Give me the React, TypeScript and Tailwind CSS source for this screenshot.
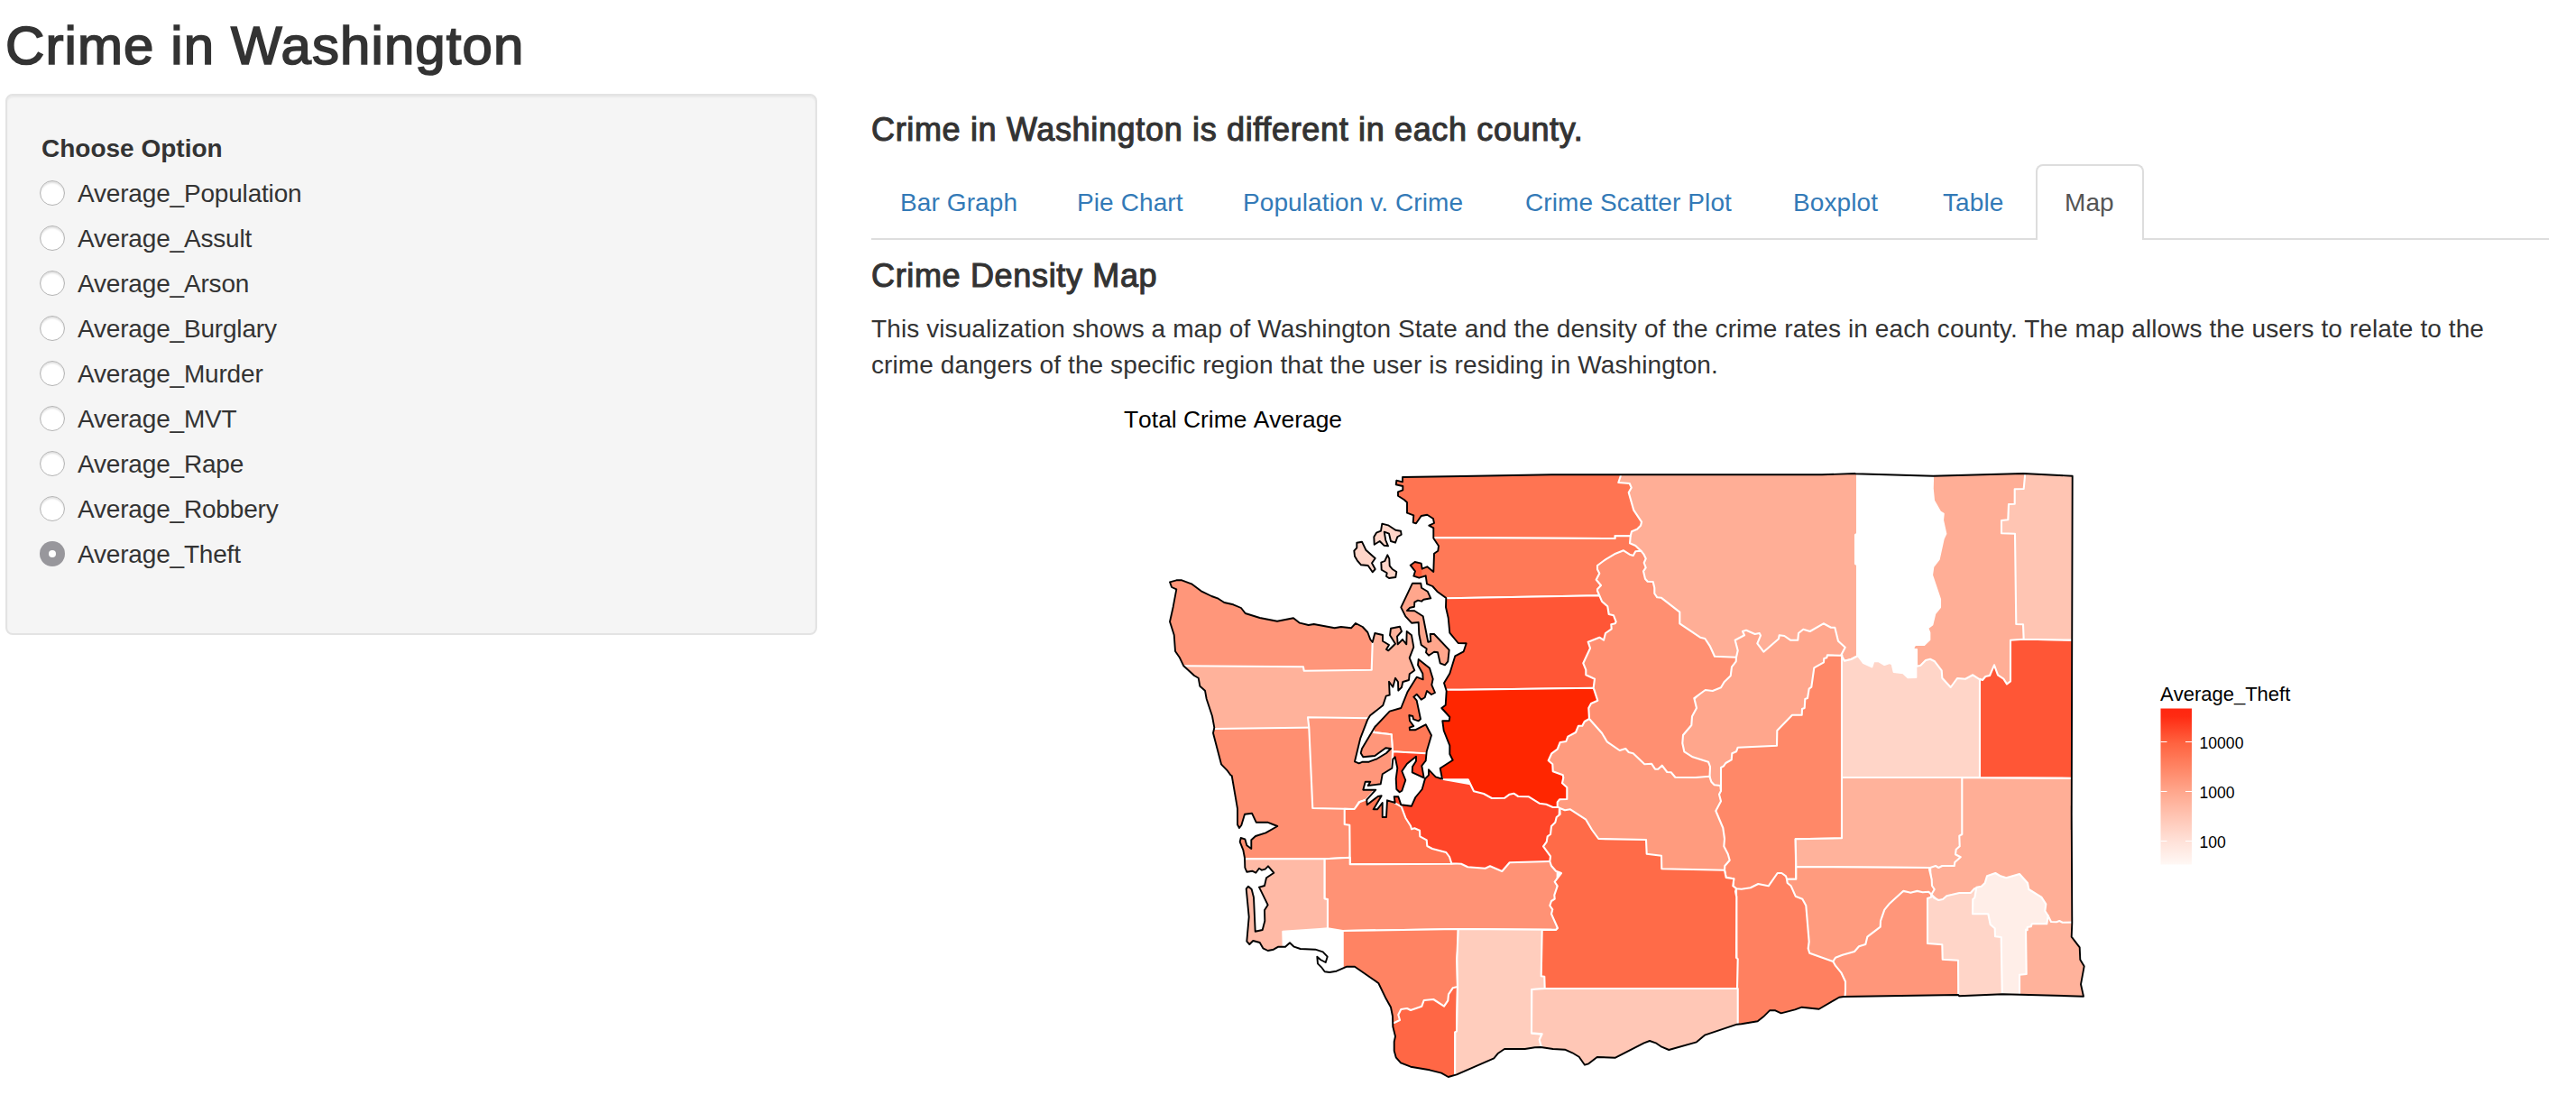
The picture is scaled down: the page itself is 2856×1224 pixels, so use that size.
import React from "react";

const options = [
  "Average_Population",
  "Average_Assult",
  "Average_Arson",
  "Average_Burglary",
  "Average_Murder",
  "Average_MVT",
  "Average_Rape",
  "Average_Robbery",
  "Average_Theft",
];

const tabs = [
  { label: "Bar Graph", width: "w-[192px]" },
  { label: "Pie Chart", width: "w-[180px]" },
  { label: "Population v. Crime", width: "w-[309px]" },
  { label: "Crime Scatter Plot", width: "w-[293px]" },
  { label: "Boxplot", width: "w-[162px]" },
  { label: "Table", width: "w-[131px]" },
  { label: "Map", width: "w-[120px]", active: true },
];

// Map geometry is stored per sheet; a letter switches to that sheet's origin.
// Sheet units are a third of a map unit.
const sheets: Record<string, [number, number]> = {
  A: [1280, 500],
  C: [1480, 700],
  D: [1340, 860],
  E: [1620, 500],
  F: [1960, 500],
  G: [1680, 840],
  H: [1980, 860],
};

function shape(points: string): string {
  let origin = sheets.A;
  const out: string[] = [];
  for (const token of points.trim().split(/\s+/)) {
    if (sheets[token]) {
      origin = sheets[token];
      continue;
    }
    const [x, y] = token.split(",").map(Number);
    out.push(`${(origin[0] + x / 3).toFixed(1)} ${(origin[1] + y / 3).toFixed(1)}`);
  }
  return `M${out.join("L")}Z`;
}

const mainland = `
A 825,87 E 0,84 300,79 1200,79 1310,75 F 290,76 550,83 850,75 1013,83 1010,1260
H 950,100 952,490 950,536 977,571 979,612 992,634 981,694 990,734 780,728 720,727 577,733 573,729 192,735
G 1077,797 1010,836 953,830 930,838 884,850 865,841 846,841 825,862 806,877 752,886 737,887 630,923 603,946 511,972 487,962 467,949 447,942 428,949 333,998 272,996 244,1018 231,1022 212,995 190,982 165,971 125,969 85,963
D 1085,904 1052,909 984,909 963,923 949,940 825,994 797,1002 774,989 735,979 672,968 639,955 623,937 617,915 617,885 621,867 613,835 612,800 606,770 590,742 565,690 486,635 460,635 425,650 402,654 386,652 375,637 363,625 361,602 372,612 389,621 395,602 380,586 355,578 305,576 284,569 270,556 255,569 232,569 216,578 197,582 181,574 170,555 148,549 136,561 127,551 134,470 125,376 132,368 143,378 150,405 155,518 179,513 187,483 186,447 197,430 168,371 186,366 192,340 217,323 198,301 188,311 177,314 168,308 157,323 145,317 127,320 121,306 120,274 115,247 104,220 107,207 121,211 127,232 142,243 142,214 156,201 190,190 229,168 196,155 158,155 144,125 120,128 109,165 102,174 96,163 96,110 77,0
A 253,1078 243,1064 222,1042 195,938 199,920 192,882 173,825 168,797 151,782 146,755 132,747 97,715 84,688 69,666 65,612 51,568 62,518 73,460 57,453 51,436 73,430 91,430 123,442 155,466 190,483 212,491 232,504 262,511 288,522 302,540 350,555 408,566 462,556 483,572 512,579 530,576 599,589 620,585 654,589 669,573 692,585 709,603 718,627 725,636 733,606 759,612 759,632 780,645 771,660 778,664 801,641 783,613 786,590 816,584 822,600 807,617 809,643 825,627 838,643 839,600 855,613 862,652 848,688 865,730 848,742 846,762 826,768 822,786 811,797 810,768 801,755 793,785 780,767 782,812 770,815 760,846 717,880 708,895 685,955 666,1033 680,1039 692,1034 713,1034 740,1024 771,1005 786,990 769,988 733,1014 694,1018 686,1005 690,990 733,918 782,866 820,855 842,800
C 272,152 293,160 292,140 276,112 278,93 315,122 326,158 322,178 333,204 321,210 306,198 299,220 287,227 272,209 262,218 272,230 285,292 278,298 261,292 259,282 247,279 249,298 262,315 248,320 249,328 267,328 302,310 321,346 305,400 302,430 289,447 296,487 257,469 258,450 270,431 270,416 240,440 223,465 235,495 223,530 215,535 205,525 203,490 208,455 200,418 193,425 190,455 158,475 152,508 110,513 118,500 101,500 94,527 136,527 106,560 107,577 143,549 155,547 128,592 141,592 158,570 158,618 171,618 174,562 200,570 197,550 211,550 220,577 255,581 268,552 290,525 300,490 312,478 312,460 335,484 357,491 350,455 392,428 382,408 382,380 362,330 358,298 380,298 382,285 355,255 368,245 371,198 363,172 382,140 400,82 428,67 437,40 410,39
A 982,605 977,555 969,520 970,489 940,467 925,450 906,442 902,415 880,422 862,416 867,400 851,380 866,369 887,374 890,392 907,385 928,402 930,341 943,332 945,316 928,290 928,256 913,248 930,240 927,225 907,212 887,216 870,241 860,238 862,214 840,206 840,171 830,162 810,149 810,136 826,130 826,117 803,112 805,98 825,103`;

const islands = [
  {
    name: "Island",
    fill: "#FFA68C",
    points:
      "A 858,440 886,440 888,455 908,467 919,490 895,494 888,500 876,497 865,503 864,518 850,521 840,531 865,532 893,550 910,635 919,633 917,609 930,609 980,662 976,700 966,712 950,706 942,670 930,668 912,680 903,670 905,658 887,645 880,610 878,570 855,572 835,550 820,520",
  },
  {
    name: "Orcas",
    fill: "#FFD5C8",
    points:
      "A 757,242 777,247 802,263 819,266 821,278 808,286 801,305 786,300 780,275 764,269 769,297 777,316 763,314 749,300 731,311 730,286 738,272 753,266",
  },
  {
    name: "San Juan",
    fill: "#FFD5C8",
    points:
      "A 673,305 690,302 703,329 734,357 723,373 734,393 725,403 710,381 687,379 674,364 666,350 664,332 673,322",
  },
  {
    name: "Lopez",
    fill: "#FFD5C8",
    points:
      "A 775,346 781,358 782,382 791,393 805,402 802,420 780,423 771,417 773,406 755,395 754,371 766,366",
  },
];

// Listed back to front: a later county covers the loose edge of an earlier one.
const counties = [
  { name: "Jefferson", fill: "#FFB29B", points: "A 0,560 900,560 900,930 0,930" },
  { name: "Clallam", fill: "#FF967A", points: "A 0,400 725,400 725,638 722,728 497,731 495,718 98,715 0,715" },
  { name: "Grays Harbor", fill: "#FF8F71", points: "A 0,924 200,924 600,919 D 480,0 470,272 386,277 0,277" },
  { name: "Pacific", fill: "#FFBAA6", points: "D 0,277 386,277 386,409 396,411 396,650 0,650" },
  { name: "Wahkiakum", fill: "#FFFFFF", points: "D 249,600 247,518 370,510 396,508 446,516 446,700 249,700" },
  { name: "Kitsap", fill: "#FF7957", points: "A 725,900 785,848 830,785 869,738 870,680 960,680 950,1010 792,1000 788,943 728,936" },
  {
    name: "Mason",
    fill: "#FF967A",
    points: "A 510,886 720,889 728,936 788,943 792,1000 790,1055 C 220,580 100,562 80,568 65,592 32,590 D 346,108 341,0 A 514,920",
  },
  {
    name: "Thurston",
    fill: "#FF7452",
    points: "D 452,110 485,111 502,88 525,79 560,40 641,60 810,250 808,293 470,295 469,164 452,162",
  },
  {
    name: "Lewis",
    fill: "#FF9275",
    points: "D 386,277 470,272 470,295 808,293 1000,270 1160,270 1160,512 830,510 446,516 396,508 396,411 386,409",
  },
  { name: "Clark", fill: "#FF6745", points: "D 500,690 828,690 825,850 820,853 819,1020 500,1020" },
  {
    name: "Cowlitz",
    fill: "#FF8363",
    points:
      "D 446,516 830,510 830,560 826,610 828,702 812,706 798,727 796,748 783,767 748,744 716,747 709,767 672,780 660,774 640,777 631,795 636,813 617,822 500,822 446,700",
  },
  {
    name: "Skamania",
    fill: "#FFCDBD",
    points:
      "D 830,510 1140,512 1140,708 1075,711 1075,857 1108,860 1101,878 1107,903 1107,1000 819,1020 820,853 825,850 828,702 826,610",
  },
  { name: "Benton", fill: "#FF8060", points: "G 735,420 870,370 960,380 1100,500 1100,1000 738,1000" },
  { name: "Klickitat", fill: "#FFC7B6", points: "G 740,768 98,768 55,771 54,916 89,919 80,938 87,963 87,1100 740,1100" },
  {
    name: "Walla Walla",
    fill: "#FF967A",
    points: "H 157,618 165,632 184,655 198,685 198,715 195,760 600,760 600,385 157,385",
  },
  { name: "Okanogan", fill: "#FFAE96", points: "E 500,60 1317,60 1317,682 1298,692 1275,698 1263,680 900,740 500,500" },
  {
    name: "Grant",
    fill: "#FF8868",
    points:
      "E 1267,679 1000,679 830,1000 830,1200 G 680,330 696,374 701,399 727,403 724,427 735,436 752,437 782,433 808,420 842,427 872,384 886,384 900,394 903,404 934,404 932,271 1086,268",
  },
  { name: "Stevens", fill: "#FFAE96", points: "F 400,60 1013,60 1013,800 400,800" },
  {
    name: "Lincoln",
    fill: "#FFD5C8",
    points:
      "F 246,683 255,698 277,693 300,681 320,660 495,660 495,716 508,713 525,696 540,692 555,700 578,730 580,755 608,786 630,756 657,758 682,745 705,760 705,1086 246,1086",
  },
  { name: "Whitman", fill: "#FFAE96", points: "H 480,6 950,8 970,8 970,520 520,520 520,430 484,395 480,300" },
  {
    name: "Spokane",
    fill: "#FF5636",
    points:
      "F 807,629 851,626 1020,629 1020,1088 705,1086 705,758 714,762 724,750 738,747 753,712 765,745 784,758 795,775 807,766",
  },
  {
    name: "Pend Oreille",
    fill: "#FFC5B3",
    points: "F 855,60 855,84 851,126 821,127 821,176 801,177 799,229 777,231 777,274 822,275 826,576 849,577 851,626 1020,629 1020,60",
  },
  {
    name: "Adams",
    fill: "#FFB29B",
    points:
      "H 186,6 586,6 586,195 577,200 578,235 566,245 564,262 581,271 562,288 560,300 520,300 508,306 498,300 480,306 34,303 32,211 186,208",
  },
  {
    name: "Franklin",
    fill: "#FF9B7E",
    points:
      "H 34,303 480,306 477,311 485,345 486,366 494,378 484,395 475,386 455,388 437,383 415,389 391,383 345,425 328,446 315,483 314,503 271,536 265,561 243,568 228,585 188,596 165,605 157,618 79,590 74,575 77,552 67,432 55,410 32,401 17,367 5,357 3,344 34,344",
  },
  {
    name: "Columbia",
    fill: "#FFD5C8",
    points: "H 471,408 483,404 484,395 492,406 508,414 522,411 535,400 577,390 614,390 628,375 720,400 720,760 574,760 573,614 521,611 520,562 471,558",
  },
  { name: "Asotin", fill: "#FFB29B", points: "H 777,760 777,500 850,480 872,466 882,486 900,487 910,483 920,488 1020,487 1020,760" },
  {
    name: "Garfield",
    fill: "#FFEEE8",
    points:
      "H 634,371 650,368 662,357 669,334 697,324 712,333 733,340 777,327 804,357 808,378 850,404 865,427 862,450 872,466 868,493 818,493 815,502 803,504 803,514 798,512 800,660 777,662 777,760 720,760 716,537 696,535 695,508 680,495 673,460 621,460 622,411 628,406",
  },
  {
    name: "Ferry",
    fill: "#FFFFFF",
    points:
      "F 300,60 300,274 291,279 291,375 300,380 300,681 318,705 346,718 352,700 368,699 388,711 405,705 413,709 419,735 450,739 466,754 493,753 493,670 484,655 490,645 520,645 538,628 538,604 532,589 547,578 556,541 573,520 573,493 546,413 550,385 569,360 584,292 592,275 582,230 584,209 573,202 552,165 548,125 550,60",
  },
  {
    name: "Douglas",
    fill: "#FFA68C",
    points:
      "E 915,686 920,664 911,629 942,613 936,600 948,596 977,609 992,606 996,614 985,640 1006,668 1056,625 1058,613 1075,615 1095,629 1120,629 1122,606 1138,593 1160,600 1205,574 1230,587 1243,587 1254,632 1277,653 1263,680 1218,679 1216,688 1207,690 1206,703 1174,721 1165,785 1157,791 1152,822 1144,825 1142,855 1134,858 1133,878 1101,878 1051,930 1050,980 920,986 915,1000 901,1006 899,1027 880,1038 873,1048 864,1053 864,1130 780,1110 700,900 900,700",
  },
  {
    name: "Whatcom",
    fill: "#FF7452",
    points:
      "A 780,60 E 530,60 530,84 523,105 560,108 566,122 557,138 574,197 600,236 597,248 585,260 567,268 563,283 512,282 512,291 A 928,288 780,288",
  },
  {
    name: "Skagit",
    fill: "#FF7957",
    points:
      "A 928,288 E 512,291 512,282 563,283 561,307 580,315 598,332 550,420 500,470 460,481 0,489 A 970,491 925,470 890,435 840,435 840,330",
  },
  {
    name: "Snohomish",
    fill: "#FF5636",
    points: "A 960,490 E 0,489 460,481 530,500 530,640 460,788 0,794 A 960,794 955,770 990,690 995,660 980,610 960,560",
  },
  {
    name: "Pierce",
    fill: "#FF4528",
    points:
      "C 180,560 190,455 193,400 303,406 345,440 357,491 D 1168,80 1160,284 1001,289 976,318 936,301 920,308 862,304 840,293 808,292 801,270 790,255 744,243 727,234 725,214 703,202 702,182 685,175 675,178 672,167 655,140 641,103",
  },
  {
    name: "King",
    fill: "#FF2600",
    points:
      "C 345,450 345,194 E 0,794 440,788 480,830 430,960 380,1185 322,1185 D 1145,105 1123,95 1100,92 1065,70 1030,69 1015,59 1001,62 985,74 942,75 915,60 882,52 863,13 778,12 C 357,492",
  },
  {
    name: "Chelan",
    fill: "#FF8F71",
    points:
      "E 598,332 607,343 614,358 608,372 614,388 606,400 612,425 620,434 638,435 643,455 643,474 652,487 665,488 727,536 727,574 795,620 811,624 828,650 843,683 915,686 914,700 900,718 896,748 875,768 864,787 836,798 812,795 775,822 783,855 768,883 766,912 738,945 736,972 742,1000 770,1018 822,1034 828,1050 826,1100 500,1100 426,891 424,855 432,840 454,830 440,788 444,758 415,745 415,728 406,706 429,656 422,635 460,620 474,629 480,606 500,592 499,577 512,574 515,568 507,547 491,543 487,517 468,500 453,465 453,460 465,447 449,428 460,407 453,394 453,381 480,361 510,343 540,331 560,344 572,348 580,334",
  },
  {
    name: "Yakima",
    fill: "#FF6B48",
    points:
      "G 148,168 300,168 696,340 696,374 701,399 727,403 724,427 735,436 732,445 736,463 735,665 740,670 738,768 98,768 97,728 86,727 89,573 135,573 141,567 120,520 124,505 115,492 120,477 131,470 130,457 140,427 131,413 153,384 135,377 120,360 115,345 117,328 93,295 104,280 107,262 117,255 120,228 133,215 137,198 149,188",
  },
  {
    name: "Kittitas",
    fill: "#FF9B7E",
    points:
      "E 426,891 468,938 485,967 527,996 547,990 557,1002 572,1006 610,1042 633,1040 645,1058 655,1058 668,1046 685,1068 698,1069 712,1085 780,1086 826,1082 832,1100 842,1111 862,1113 864,1130 858,1142 864,1165 847,1197 871,1254 876,1290 874,1315 887,1340 893,1361 877,1380 G 696,374 487,370 486,326 437,320 435,273 277,270 255,240 235,206 183,172 165,175 148,168 E 320,1182 320,1168 327,1159 352,1158 352,1119 336,1105 340,1087 338,1078 305,1066 304,1042 290,1030 301,1006 320,992 329,969 349,966 355,950 381,936 390,914 403,914 410,900",
  },
];

const legendTicks = [
  { y: 822.5, label: "10000" },
  { y: 877.5, label: "1000" },
  { y: 932.5, label: "100" },
];

function CountyMap() {
  return (
    <svg
      viewBox="966 434 1860 790"
      className="block h-[790px] w-[1860px] [font-kerning:none]"
      fontFamily="'Liberation Sans', Arial, sans-serif"
    >
      <defs>
        <clipPath id="land">
          <path d={shape(mainland)} />
        </clipPath>
        <linearGradient id="scale" x1="0" y1="0" x2="0" y2="1">
          <stop offset="0" stopColor="#FF2610" />
          <stop offset="0.05" stopColor="#FF2A12" />
          <stop offset="0.22" stopColor="#FF623F" />
          <stop offset="0.38" stopColor="#FF8565" />
          <stop offset="0.53" stopColor="#FFA68C" />
          <stop offset="0.7" stopColor="#FFC6B5" />
          <stop offset="0.85" stopColor="#FFE1D8" />
          <stop offset="1" stopColor="#FFF8F5" />
        </linearGradient>
      </defs>
      <text x="1246" y="474" fontSize="26.4" fill="#000">
        Total Crime Average
      </text>
      <g clipPath="url(#land)" stroke="#fff" strokeWidth="2.1" strokeLinejoin="round">
        {counties.map((c) => (
          <path key={c.name} d={shape(c.points)} fill={c.fill} />
        ))}
        <path d={shape("A 840,360 889,360 889,400 889,430 840,430")} fill="#FF5C3B" stroke="none" />
      </g>
      <g stroke="#000" strokeWidth="1.9" strokeLinejoin="round">
        <path d={shape(mainland)} fill="none" />
        {islands.map((i) => (
          <path key={i.name} d={shape(i.points)} fill={i.fill} />
        ))}
      </g>
      <text x="2395" y="777" fontSize="22" fill="#000">
        Average_Theft
      </text>
      <rect x="2395.5" y="785.5" width="34.5" height="173" fill="url(#scale)" />
      {legendTicks.map((t) => (
        <g key={t.label}>
          <path d={`M2395.5 ${t.y}h7M2423 ${t.y}h7`} stroke="#fff" strokeWidth="1" />
          <text x="2438.5" y={t.y + 7} fontSize="17.6" fill="#000">
            {t.label}
          </text>
        </g>
      ))}
    </svg>
  );
}

function Radio({ label, checked }: { label: string; checked: boolean }) {
  return (
    <label className="flex h-10 items-center">
      <span
        className={
          checked
            ? "-ml-0.5 flex h-7 w-7 items-center justify-center rounded-full bg-[#98979c]"
            : "-ml-0.5 h-7 w-7 rounded-full border border-[#b4b4b4] bg-white shadow-[inset_0_2px_2px_rgba(0,0,0,0.12)]"
        }
      >
        {checked && <span className="h-2 w-2 rounded-full bg-white" />}
      </span>
      <span className="ml-3.5 pt-0.5 tracking-[-0.18px]">{label}</span>
    </label>
  );
}

export default function App() {
  return (
    <div className="h-[1224px] w-[2856px] overflow-hidden bg-white pl-1.5 pt-[18px] font-['Liberation_Sans',Arial,sans-serif] text-[28px] leading-10 text-[#333]">
      <h2 className="h-[66px] text-[60px] leading-[66px] tracking-[1.1px] [-webkit-text-stroke:1.7px_#333]">
        Crime in Washington
      </h2>
      <div className="flex items-start">
        <form className="mt-5 h-[600px] w-[900px] rounded-lg border-2 border-[#e3e3e3] bg-[#f5f5f5] p-[38px] shadow-[inset_0_2px_2px_rgba(0,0,0,0.05)]">
          <div className="mb-2.5 h-10 font-bold leading-[42px]">Choose Option</div>
          <div className="flex flex-col gap-2.5">
            {options.map((o) => (
              <Radio key={o} label={o} checked={o === "Average_Theft"} />
            ))}
          </div>
        </form>
        <main className="ml-[60px] mt-10 w-[1860px]">
          <h4 className="mb-[18px] h-10 text-[36px] tracking-[0.66px] [-webkit-text-stroke:1.1px_#333]">
            Crime in Washington is different in each county.
          </h4>
          <nav className="flex h-[84px] gap-1 border-b-2 border-[#ddd]">
            {tabs.map((t) => (
              <a
                key={t.label}
                className={`${t.width} ${
                  t.active
                    ? "h-[84px] rounded-t-lg border-2 border-b-0 border-[#ddd] bg-white text-[#555]"
                    : "h-[82px] border-2 border-transparent text-[#337ab7]"
                } shrink-0 whitespace-nowrap px-[30px] pt-[21px] tracking-[0.1px]`}
              >
                {t.label}
              </a>
            ))}
          </nav>
          <h4 className="mb-[18px] mt-5 h-10 text-[36px] tracking-[0.66px] [-webkit-text-stroke:1.1px_#333]">
            Crime Density Map
          </h4>
          <p className="mb-[9px] whitespace-nowrap pt-px tracking-[0.1px]">
            This visualization shows a map of Washington State and the density of the crime rates in each county. The map allows the users to relate to the
            <br />
            crime dangers of the specific region that the user is residing in Washington.
          </p>
          <CountyMap />
        </main>
      </div>
    </div>
  );
}
